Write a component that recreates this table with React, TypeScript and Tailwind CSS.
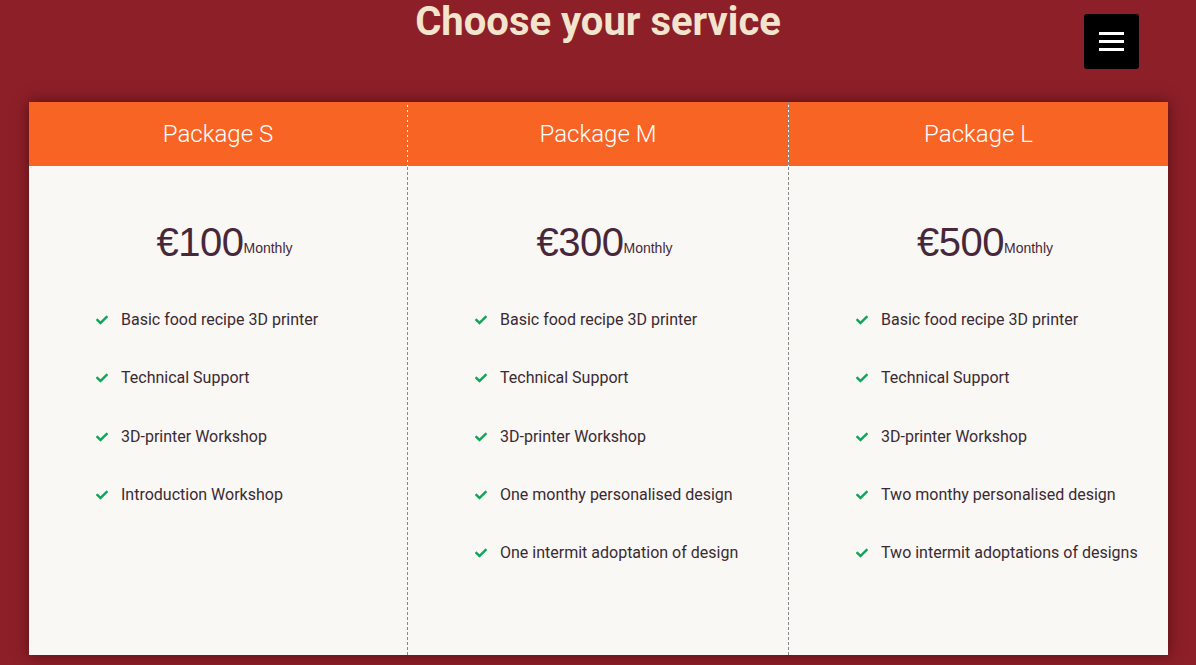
import { FaCheck } from "react-icons/fa";

const packages = [
  {
    name: "Package S",
    price: "€100",
    features: [
      "Basic food recipe 3D printer",
      "Technical Support",
      "3D-printer Workshop",
      "Introduction Workshop",
    ],
  },
  {
    name: "Package M",
    price: "€300",
    features: [
      "Basic food recipe 3D printer",
      "Technical Support",
      "3D-printer Workshop",
      "One monthy personalised design",
      "One intermit adoptation of design",
    ],
  },
  {
    name: "Package L",
    price: "€500",
    features: [
      "Basic food recipe 3D printer",
      "Technical Support",
      "3D-printer Workshop",
      "Two monthy personalised design",
      "Two intermit adoptations of designs",
    ],
  },
];

export default function App() {
  return (
    <div className="relative min-h-[665px] w-full overflow-hidden bg-[#8d1f28] font-['Roboto',sans-serif]">
      <h1 className="text-center text-[40px] font-bold leading-[44px] text-[#f2e4cd]">
        Choose your service
      </h1>

      <button className="absolute left-[1084px] top-[14px] flex h-[55px] w-[55px] flex-col items-center justify-center gap-[5px] rounded-[3px] bg-black">
        <span className="h-[3px] w-[25px] bg-white" />
        <span className="h-[3px] w-[25px] bg-white" />
        <span className="h-[3px] w-[25px] bg-white" />
      </button>

      <div className="ml-[29px] mt-[58px] grid h-[553px] w-[1139px] grid-cols-[379px_381px_379px] bg-[#f9f8f5] shadow-[0_0_14px_rgba(40,0,0,0.55)]">
        {packages.map((p, i) => (
          <div
            key={p.name}
            className={
              i < 2
                ? "flex flex-col border-r border-dashed border-[#8a8a8a]"
                : "flex flex-col"
            }
          >
            <div className="flex h-[64px] items-center justify-center bg-[#f86424] text-[24px] font-light text-white">
              {p.name}
            </div>
            <div className="flex items-baseline justify-center pl-[13px] pt-[52px] text-[#47283a] font-['Liberation_Sans',Arial,sans-serif]">
              <span className="text-[40px] leading-[48px] tracking-[-0.5px]">
                {p.price}
              </span>
              <span className="-translate-y-[3px] text-[14px]">Monthly</span>
            </div>
            <ul className="mt-[42px] flex flex-col gap-[34.3px] pl-[67px]">
              {p.features.map((f) => (
                <li
                  key={f}
                  className="flex h-[24px] items-center gap-[13px] text-[16px] text-[#3b2a33]"
                >
                  <FaCheck className="h-[12px] w-[12px] shrink-0 text-[#12a55a]" />
                  {f}
                </li>
              ))}
            </ul>
          </div>
        ))}
      </div>
    </div>
  );
}
